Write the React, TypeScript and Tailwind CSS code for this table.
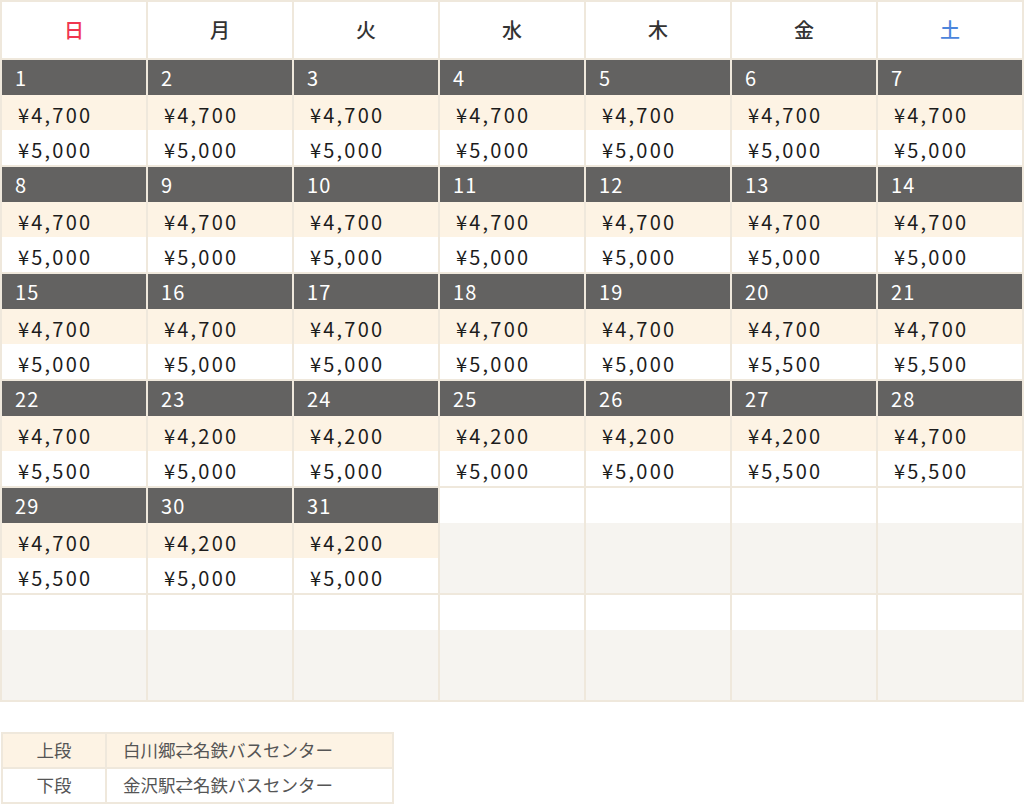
const DAYS = ["日", "月", "火", "水", "木", "金", "土"];

type Day = { date: number; top: string; bottom: string };

const PRICES: [string, string][] = [
  ["4,700", "5,000"], ["4,700", "5,000"], ["4,700", "5,000"], ["4,700", "5,000"], ["4,700", "5,000"], ["4,700", "5,000"], ["4,700", "5,000"],
  ["4,700", "5,000"], ["4,700", "5,000"], ["4,700", "5,000"], ["4,700", "5,000"], ["4,700", "5,000"], ["4,700", "5,000"], ["4,700", "5,000"],
  ["4,700", "5,000"], ["4,700", "5,000"], ["4,700", "5,000"], ["4,700", "5,000"], ["4,700", "5,000"], ["4,700", "5,500"], ["4,700", "5,500"],
  ["4,700", "5,500"], ["4,200", "5,000"], ["4,200", "5,000"], ["4,200", "5,000"], ["4,200", "5,000"], ["4,200", "5,500"], ["4,700", "5,500"],
  ["4,700", "5,500"], ["4,200", "5,000"], ["4,200", "5,000"],
];

const days: Day[] = PRICES.map(([top, bottom], i) => ({ date: i + 1, top, bottom }));

// 6 weeks x 7 columns, month starts on Sunday
const weeks: (Day | null)[][] = Array.from({ length: 6 }, (_, w) =>
  Array.from({ length: 7 }, (_, d) => days[w * 7 + d] ?? null)
);

const font = "font-['Noto_Sans_CJK_JP','Noto_Sans',sans-serif]";

function DayCell({ day }: { day: Day | null }) {
  if (!day) {
    return (
      <td className="border-2 border-[#efe8dc] p-0 align-top">
        <div className="h-[35px] bg-white" />
        <div className="h-[70px] bg-[#f6f4f0]" />
      </td>
    );
  }
  return (
    <td className="border-2 border-[#efe8dc] p-0 align-top">
      <div className="flex h-[35px] items-center bg-[#636261] pl-[13px] text-[20px] tracking-[0.06em] text-white">
        {day.date}
      </div>
      <div className="flex h-[35px] items-center bg-[#fdf3e4] pt-[4px] pl-[16px] text-[20px] tracking-[0.11em] text-[#1c1c1c]">
        ¥{day.top}
      </div>
      <div className="flex h-[35px] items-center bg-white pt-[5px] pl-[16px] text-[20px] tracking-[0.11em] text-[#1c1c1c]">
        ¥{day.bottom}
      </div>
    </td>
  );
}

export default function App() {
  return (
    <div className={`${font} min-h-[805px] w-[1024px] bg-white`}>
      <table className="w-[1024px] table-fixed border-collapse">
        <thead>
          <tr>
            {DAYS.map((d, i) => (
              <th
                key={d}
                className={
                  "h-[58px] border-2 border-[#efe8dc] bg-white p-0 text-center text-[20px] font-medium " +
                  (i === 0 ? "text-[#f0364f]" : i === 6 ? "text-[#4b85dc]" : "text-[#333]")
                }
              >
                {d}
              </th>
            ))}
          </tr>
        </thead>
        <tbody>
          {weeks.map((week, w) => (
            <tr key={w}>
              {week.map((day, d) => (
                <DayCell key={d} day={day} />
              ))}
            </tr>
          ))}
        </tbody>
      </table>

      <table className="mt-[30px] ml-[1px] w-[393px] table-fixed border-collapse text-[17.5px] text-[#555]">
        <tbody>
          <tr className="bg-[#fdf3e4]">
            <td className="h-[35px] w-[104px] border-2 border-[#efe8dc] p-0 text-center">上段</td>
            <td className="h-[35px] border-2 border-[#efe8dc] p-0 pl-[16px]">白川郷⇄名鉄バスセンター</td>
          </tr>
          <tr className="bg-white">
            <td className="h-[35px] border-2 border-[#efe8dc] p-0 text-center">下段</td>
            <td className="h-[35px] border-2 border-[#efe8dc] p-0 pl-[16px]">金沢駅⇄名鉄バスセンター</td>
          </tr>
        </tbody>
      </table>
    </div>
  );
}
